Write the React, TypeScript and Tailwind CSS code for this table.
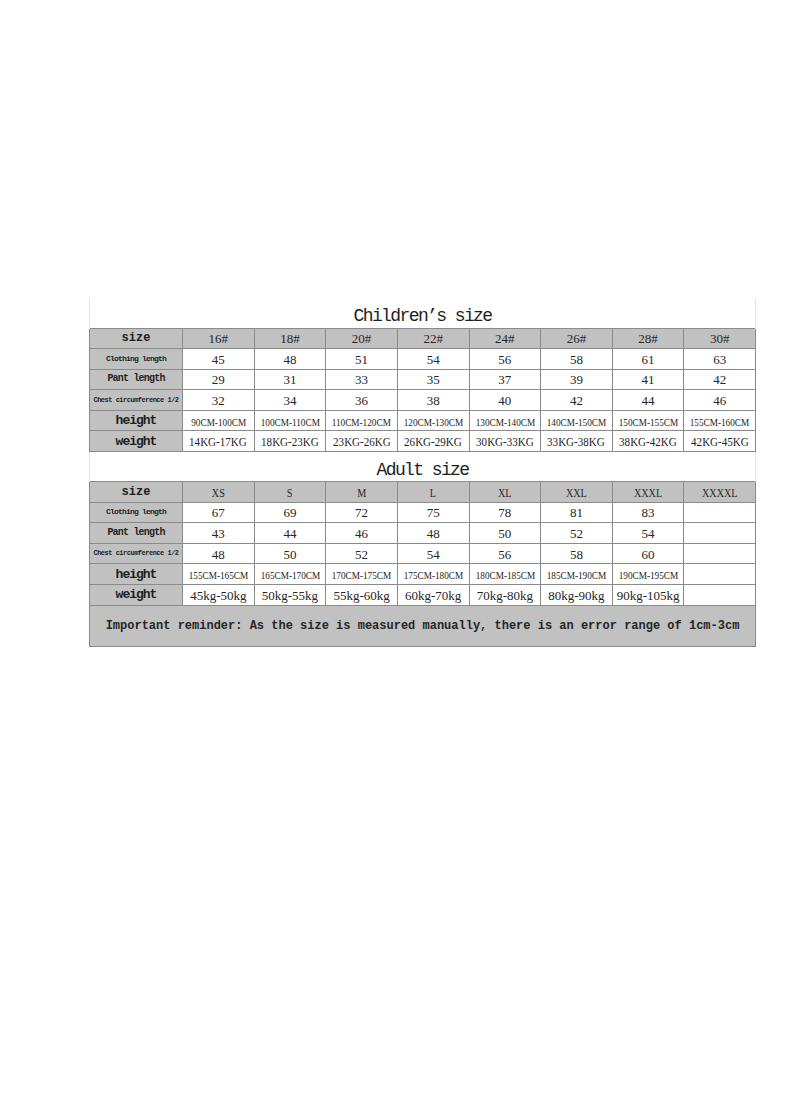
import React from "react";

// Size chart: children + adult tables, one shared 9-column grid.

type Kind = "num" | "cm" | "kgU" | "kgL" | "head" | "letter";

const kids = {
  sizes: ["16#", "18#", "20#", "22#", "24#", "26#", "28#", "30#"],
  clothing: ["45", "48", "51", "54", "56", "58", "61", "63"],
  pant: ["29", "31", "33", "35", "37", "39", "41", "42"],
  chest: ["32", "34", "36", "38", "40", "42", "44", "46"],
  height: [
    "90CM-100CM",
    "100CM-110CM",
    "110CM-120CM",
    "120CM-130CM",
    "130CM-140CM",
    "140CM-150CM",
    "150CM-155CM",
    "155CM-160CM",
  ],
  weight: [
    "14KG-17KG",
    "18KG-23KG",
    "23KG-26KG",
    "26KG-29KG",
    "30KG-33KG",
    "33KG-38KG",
    "38KG-42KG",
    "42KG-45KG",
  ],
};

const adults = {
  sizes: ["XS", "S", "M", "L", "XL", "XXL", "XXXL", "XXXXL"],
  clothing: ["67", "69", "72", "75", "78", "81", "83", ""],
  pant: ["43", "44", "46", "48", "50", "52", "54", ""],
  chest: ["48", "50", "52", "54", "56", "58", "60", ""],
  height: [
    "155CM-165CM",
    "165CM-170CM",
    "170CM-175CM",
    "175CM-180CM",
    "180CM-185CM",
    "185CM-190CM",
    "190CM-195CM",
    "",
  ],
  weight: [
    "45kg-50kg",
    "50kg-55kg",
    "55kg-60kg",
    "60kg-70kg",
    "70kg-80kg",
    "80kg-90kg",
    "90kg-105kg",
    "",
  ],
};

const valueCls: Record<Kind, string> = {
  num: "text-[13px]",
  cm: "inline-block text-[11px] scale-x-[0.84] whitespace-nowrap",
  kgU: "inline-block text-[13px] scale-x-[0.85] whitespace-nowrap",
  kgL: "inline-block text-[13px] whitespace-nowrap",
  head: "text-[13px]",
  letter: "inline-block text-[13px] scale-x-[0.78] whitespace-nowrap",
};

function Row({
  label,
  labelCls,
  values,
  kind,
  gray,
}: {
  label: string;
  labelCls: string;
  values: string[];
  kind: Kind;
  gray?: boolean;
}) {
  return (
    <tr className="h-[20.6px]">
      <td
        className={`border border-[#8a8a8a] bg-[#c1c1c1] p-0 text-center font-['Liberation_Mono',monospace] font-bold leading-none whitespace-nowrap text-[#1e1e1e] ${labelCls}`}
      >
        {label}
      </td>
      {values.map((v, i) => (
        <td
          key={i}
          className={`border border-[#8a8a8a] p-0 text-center font-['Liberation_Serif',serif] leading-none text-[#262626] ${
            gray ? "bg-[#c1c1c1]" : "bg-white"
          }`}
        >
          <span className={valueCls[kind]}>{v}</span>
        </td>
      ))}
    </tr>
  );
}

function Title({ text }: { text: string }) {
  return (
    <tr className="h-[30px]">
      <td
        colSpan={9}
        className="border-x border-[#e4e4e4] bg-white p-0 pt-[7px] text-center font-['Liberation_Mono',monospace] text-[18px] leading-none tracking-[-1.6px] text-[#1e1e1e]"
      >
        {text}
      </td>
    </tr>
  );
}

function Block({
  data,
  head,
  height,
  weight,
}: {
  data: typeof kids;
  head: Kind;
  height: Kind;
  weight: Kind;
}) {
  return (
    <>
      <Row label="size" labelCls="text-[12px]" values={data.sizes} kind={head} gray />
      <Row
        label="Clothing length"
        labelCls="text-[8px] tracking-[-0.8px]"
        values={data.clothing}
        kind="num"
      />
      <Row
        label="Pant length"
        labelCls="text-[10px] tracking-[-0.8px]"
        values={data.pant}
        kind="num"
      />
      <Row
        label="Chest circumference 1/2"
        labelCls="text-[7px] tracking-[-0.5px]"
        values={data.chest}
        kind="num"
      />
      <Row
        label="height"
        labelCls="text-[13px] tracking-[-1px]"
        values={data.height}
        kind={height}
      />
      <Row
        label="weight"
        labelCls="text-[13px] tracking-[-1px]"
        values={data.weight}
        kind={weight}
      />
    </>
  );
}

export default function App() {
  return (
    <div className="min-h-[1096px] w-[800px] bg-white pl-[89px] pt-[298px]">
      <table className="w-[667px] table-fixed border-collapse">
        <colgroup>
          <col className="w-[93px]" />
          {Array.from({ length: 8 }).map((_, i) => (
            <col key={i} />
          ))}
        </colgroup>
        <tbody>
          <Title text="Children’s size" />
          <Block data={kids} head="head" height="cm" weight="kgU" />
          <Title text="Adult size" />
          <Block data={adults} head="letter" height="cm" weight="kgL" />
          <tr className="h-[41px]">
            <td
              colSpan={9}
              className="border border-[#8a8a8a] bg-[#c1c1c1] p-0 text-center font-['Liberation_Mono',monospace] text-[12px] font-bold leading-none whitespace-nowrap text-[#262626]"
            >
              Important reminder: As the size is measured manually, there is an
              error range of 1cm-3cm
            </td>
          </tr>
        </tbody>
      </table>
    </div>
  );
}
